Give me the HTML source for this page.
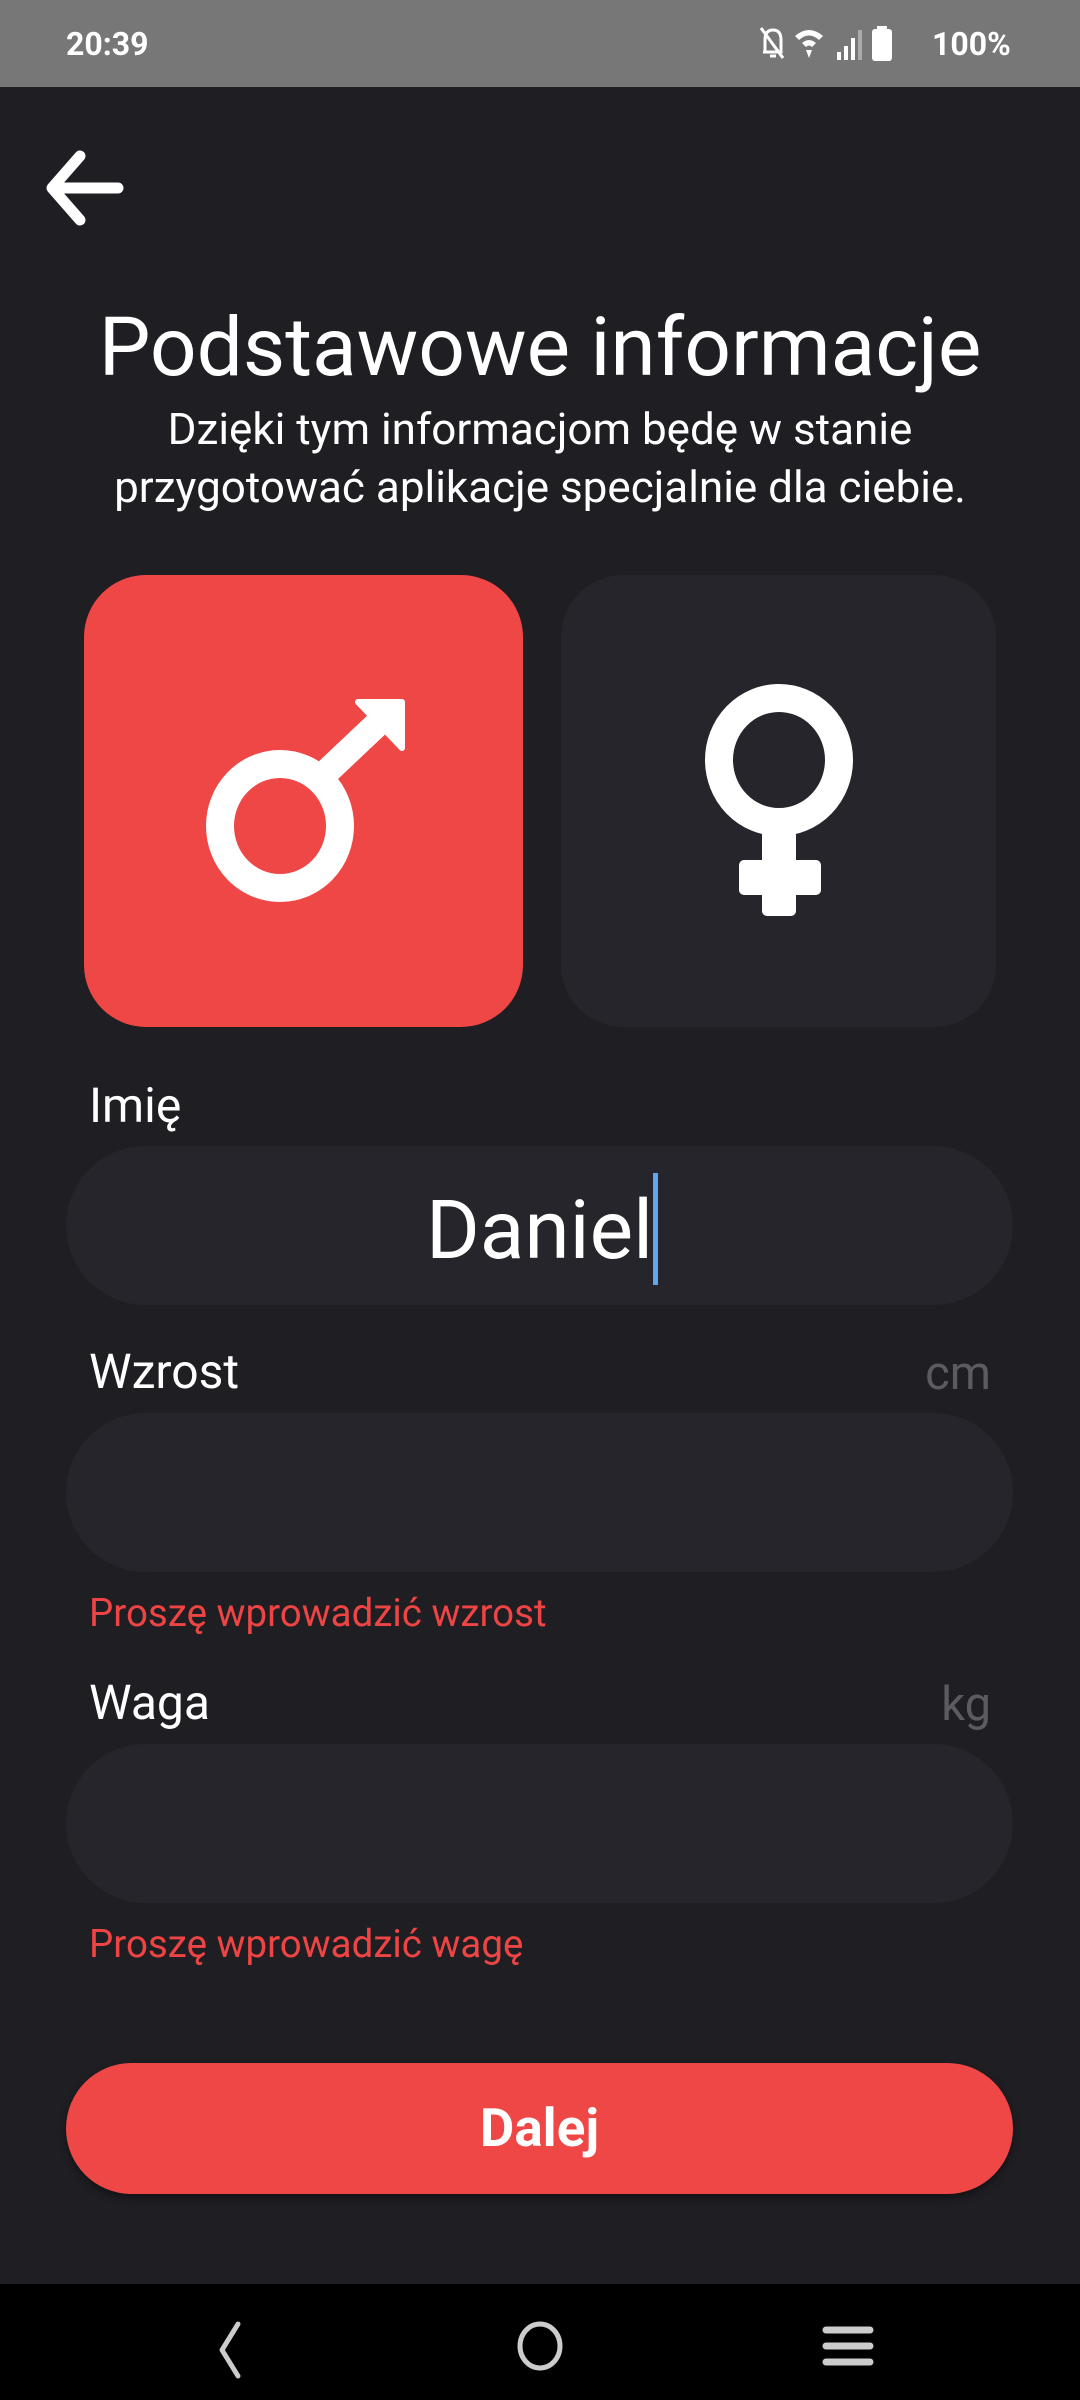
<!DOCTYPE html>
<html><head><meta charset="utf-8"><style>
*{margin:0;padding:0;box-sizing:border-box}
body{width:1080px;height:2400px;background:#1f1e23;font-family:"Roboto","Liberation Sans",sans-serif;color:#fff;position:relative;overflow:hidden}
.a{position:absolute}
.sb{left:0;top:0;width:1080px;height:87px;background:#777}
.card{border-radius:62px}
.inp{left:66px;width:947px;height:159px;background:#26252b;border-radius:80px}
.lbl{left:89px;font-size:48px;line-height:1}
.unit{right:89px;font-size:47px;color:#5c5b62;line-height:1}
.err{left:89px;font-size:38.5px;color:#ef4444;line-height:1}
</style></head><body>
<div class="a sb"></div>
<div class="a" style="left:66px;top:26px;font-size:32px;font-weight:bold;line-height:36px">20:39</div>
<svg class="a" style="left:755px;top:22px" width="260" height="44" viewBox="0 0 260 44">
<g fill="none" stroke="#fff" stroke-width="3"><path d="M10 30 L10 18 Q10 8 18 8 Q26 8 26 18 L26 30 L8 30 M15 34 L21 34 M6 6 L28 36"/></g>
<path d="M40 14 Q54 2 68 14 L64 18 Q54 9 44 18 Z M47 21 Q54 15 61 21 L57 25 Q54 22 51 25 Z M54 36 L51 28 L57 28 Z" fill="#fff"/>
<rect x="82" y="30" width="4" height="8" fill="#fff"/><rect x="89" y="24" width="4" height="14" fill="#fff"/><rect x="96" y="16" width="4" height="22" fill="#fff"/><rect x="103" y="8" width="4" height="30" fill="#aaa"/>
<rect x="117" y="7" width="20" height="32" rx="3" fill="#fff"/><rect x="122" y="4" width="10" height="4" fill="#fff"/>
</svg>
<div class="a" style="left:932px;top:26px;font-size:32px;font-weight:bold;line-height:36px">100%</div>
<svg class="a" style="left:44px;top:150px" width="80" height="76" viewBox="0 0 80 76"><path d="M36 6 L8 38 L36 70 M10 38 L74 38" fill="none" stroke="#fff" stroke-width="11" stroke-linecap="round" stroke-linejoin="round"/></svg>
<div class="a" style="left:0;width:1080px;top:300px;text-align:center;font-size:82px;line-height:96px">Podstawowe informacje</div>
<div class="a" style="left:0;width:1080px;top:400px;text-align:center;font-size:44px;line-height:58px">Dzięki tym informacjom będę w stanie<br>przygotować aplikacje specjalnie dla ciebie.</div>
<div class="a card" style="left:84px;top:575px;width:439px;height:452px;background:#ef4646"></div>
<div class="a card" style="left:561px;top:575px;width:435px;height:452px;background:#26252b"></div>
<svg class="a" style="left:0;top:0" width="1080" height="1100">
<ellipse cx="280" cy="826" rx="60" ry="62" fill="none" stroke="#fff" stroke-width="28"/>
<path d="M318 780 L390 712" stroke="#fff" stroke-width="26"/>
<path d="M358 702 L402 702 L402 748 Z" fill="#fff" stroke="#fff" stroke-width="6" stroke-linejoin="round"/>
<ellipse cx="779" cy="760" rx="60" ry="62" fill="none" stroke="#fff" stroke-width="28"/>
<rect x="762" y="830" width="34" height="86" rx="5" fill="#fff"/>
<rect x="739" y="860" width="82" height="35" rx="5" fill="#fff"/>
</svg>
<div class="a lbl" style="top:1082px">Imię</div>
<div class="a inp" style="top:1146px"></div>
<div class="a" style="left:66px;width:947px;top:1183px;text-align:center;font-size:82px;line-height:96px">Daniel</div>
<div class="a" style="left:653px;top:1173px;width:5px;height:112px;background:#5fa8f0"></div>
<div class="a lbl" style="top:1348px">Wzrost</div>
<div class="a unit" style="top:1350px">cm</div>
<div class="a inp" style="top:1413px"></div>
<div class="a err" style="top:1595px">Proszę wprowadzić wzrost</div>
<div class="a lbl" style="top:1679px">Waga</div>
<div class="a unit" style="top:1681px">kg</div>
<div class="a inp" style="top:1744px"></div>
<div class="a err" style="top:1926px">Proszę wprowadzić wagę</div>
<div class="a" style="left:66px;top:2063px;width:947px;height:131px;background:#ef4646;border-radius:66px;box-shadow:0 4px 8px rgba(0,0,0,.4);text-align:center;font-size:53px;font-weight:bold;line-height:131px">Dalej</div>
<div class="a" style="left:0;top:2284px;width:1080px;height:116px;background:#000"></div>
<svg class="a" style="left:0;top:2284px" width="1080" height="116" viewBox="0 0 1080 116">
<path d="M238 40 L222 66 L238 92" fill="none" stroke="#ccc" stroke-width="5" stroke-linecap="round" stroke-linejoin="round"/>
<ellipse cx="540" cy="62" rx="20" ry="22" fill="none" stroke="#ccc" stroke-width="5"/>
<g stroke="#ccc" stroke-width="7" stroke-linecap="round"><path d="M826 46 L870 46 M826 62 L870 62 M826 78 L870 78"/></g>
</svg>
</body></html>
